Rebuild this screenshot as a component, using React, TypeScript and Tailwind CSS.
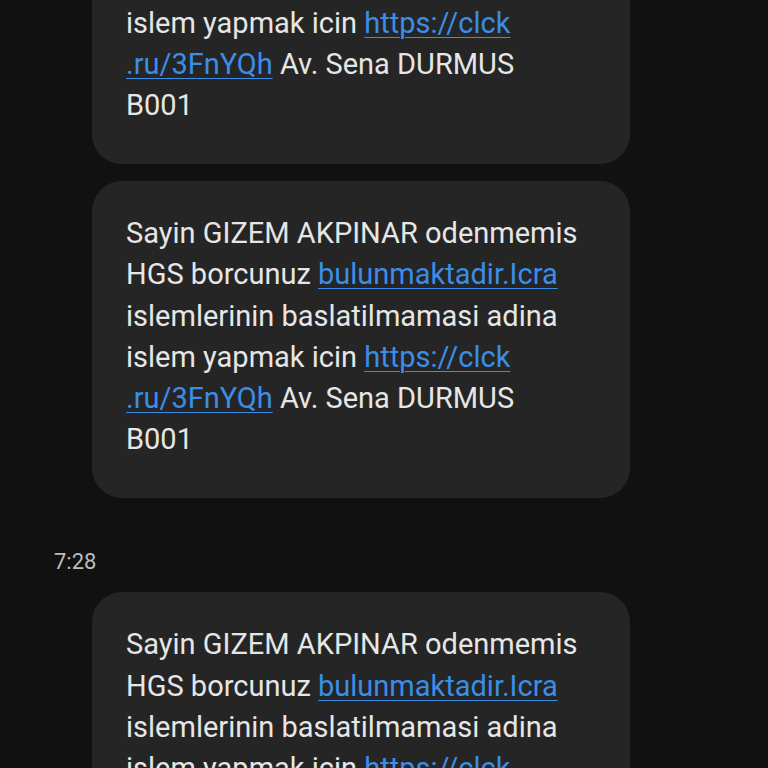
const link = 'text-[#3a8ee8] underline decoration-1 underline-offset-[4px]';

function SmsBubble() {
  return (
    <div className="w-[538px] ml-[92px] rounded-[30px] bg-[#252525] pl-[34px] pr-[16px] pt-[32px] pb-[38px]">
      <p className="text-[29px] leading-[41.2px] text-[#e6e6e6] whitespace-nowrap">
        Sayin GIZEM AKPINAR odenmemis
        <br />
        HGS borcunuz <span className={link}>bulunmaktadir.Icra</span>
        <br />
        islemlerinin baslatilmamasi adina
        <br />
        islem yapmak icin <span className={link}>https://clck</span>
        <br />
        <span className={link}>.ru/3FnYQh</span> Av. Sena DURMUS
        <br />
        B001
      </p>
    </div>
  );
}

export default function App() {
  return (
    <div className="w-[768px] h-[768px] overflow-hidden bg-[#111111] font-['Roboto',sans-serif]">
      <div className="-mt-[153px] flex flex-col">
        <SmsBubble />
        <div className="mt-[17px]">
          <SmsBubble />
        </div>
        <div className="mt-[50px] pl-[54px] text-[22px] leading-[28px] text-[#bdbdbd]">7:28</div>
        <div className="mt-[16px]">
          <SmsBubble />
        </div>
      </div>
    </div>
  );
}
